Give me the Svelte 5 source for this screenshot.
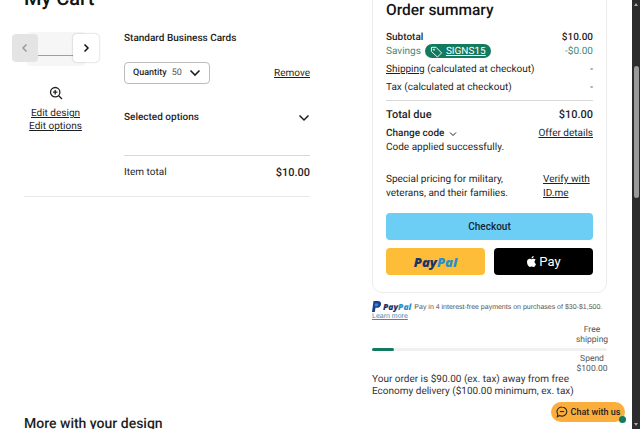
<script lang="ts">
  const summaryRows = [
    { label: 'Shipping', note: ' (calculated at checkout)', link: true },
    { label: 'Tax', note: ' (calculated at checkout)', link: false },
  ];
</script>

<div class="shell">
  <div class="page">
    <h1>My Cart</h1>

    <div class="columns">
      <section class="cart">
        <div class="item">
          <div class="preview">
            <div class="carousel">
              <div class="thumb"><span class="thumb-line"></span></div>
              <button class="arrow prev" aria-label="Previous">
                <svg width="12" height="12" viewBox="0 0 12 12"><path d="M7.500 2.500 4 6l3.500 3.500" /></svg>
              </button>
              <button class="arrow next" aria-label="Next">
                <svg width="12" height="12" viewBox="0 0 12 12"><path d="M4.500 2.500 8 6 4.500 9.500" /></svg>
              </button>
            </div>
            <svg class="zoom" width="14" height="14" viewBox="0 0 14 14">
              <circle cx="6.200" cy="6.200" r="4.700" />
              <path d="M6.200 4v4.400M4 6.200h4.400M9.700 9.700 13 13" />
            </svg>
            <a href="#design">Edit design</a>
            <a href="#options">Edit options</a>
          </div>

          <div class="details">
            <div class="name">Standard Business Cards</div>
            <div class="qty-row">
              <div class="qty">
                <b>Quantity</b><span>50</span>
                <svg width="12" height="12" viewBox="0 0 12 12"><path d="M1.500 3.500 6 8l4.500-4.500" /></svg>
              </div>
              <a href="#remove">Remove</a>
            </div>
            <div class="options">
              <b>Selected options</b>
              <svg width="12" height="12" viewBox="0 0 12 12"><path d="M1.500 3.500 6 8l4.500-4.500" /></svg>
            </div>
            <div class="total">
              <span>Item total</span><b>$10.00</b>
            </div>
          </div>
        </div>
      </section>

      <aside class="side">
        <div class="card">
          <h2>Order summary</h2>
          <div class="row strong"><span>Subtotal</span><span>$10.00</span></div>
          <div class="row savings">
            <span class="savings-label">Savings
              <span class="pill">
                <svg viewBox="0 0 14 14"><path d="M1.500 2.500h5l6 6-4.500 4.500-6.500-6z" /><circle cx="4.300" cy="5" r=".7" /></svg>
                <u>SIGNS15</u>
              </span>
            </span>
            <span>-$0.00</span>
          </div>
          {#each summaryRows as r}
            <div class="row plain">
              <span>{#if r.link}<u>{r.label}</u>{:else}{r.label}{/if}{r.note}</span><span>-</span>
            </div>
          {/each}
          <div class="row due"><b>Total due</b><b>$10.00</b></div>
          <div class="row code">
            <span class="change">Change code
              <svg width="8" height="8" viewBox="0 0 8 8"><path d="M1 2.500 4 5.500l3-3" /></svg>
            </span>
            <a href="#offer">Offer details</a>
          </div>
          <div class="applied">Code applied successfully.</div>
          <div class="military">
            <span>Special pricing for military, veterans, and their families.</span>
            <a href="#idme">Verify with ID.me</a>
          </div>
          <button class="checkout">Checkout</button>
          <div class="pay">
            <button class="paypal"><i class="pp-a">Pay</i><i class="pp-b">Pal</i></button>
            <button class="apple">
              <svg width="11" height="11" viewBox="0 0 24 24"><path d="M12.152 6.896c-.948 0-2.415-1.078-3.96-1.04-2.04.027-3.91 1.183-4.961 3.014-2.117 3.675-.546 9.103 1.519 12.09 1.013 1.454 2.208 3.09 3.792 3.039 1.52-.065 2.09-.987 3.935-.987 1.831 0 2.35.987 3.96.948 1.637-.026 2.676-1.48 3.676-2.948 1.156-1.688 1.636-3.325 1.662-3.415-.039-.013-3.182-1.221-3.22-4.857-.026-3.04 2.48-4.494 2.597-4.559-1.429-2.09-3.623-2.324-4.39-2.376-2-.156-3.675 1.09-4.61 1.09zM15.53 3.83c.843-1.012 1.4-2.427 1.245-3.83-1.207.052-2.662.805-3.532 1.818-.78.896-1.454 2.338-1.273 3.714 1.338.104 2.715-.688 3.559-1.701" /></svg>
              <span>Pay</span>
            </button>
          </div>
        </div>

        <div class="later">
          <svg width="10" height="12" viewBox="0 0 10 12"><path fill="#1b3f8f" d="M1.500 0h4.300C8.200 0 9.500 1.300 9 3.400 8.500 5.600 7 6.800 4.800 6.800H3.500L2.800 11H0z" /><path fill="#2b8fd6" d="M3 2.500h2c1 0 1.500.5 1.300 1.300-.2 1-1 1.500-2 1.500H2.600z" /></svg>
          <i class="pp-a">Pay</i><i class="pp-b">Pal</i>
          <span>Pay in 4 interest-free payments on purchases of $30-$1,500.</span>
        </div>
        <a class="learn" href="#learn">Learn more</a>

        <div class="progress-top">Free<br />shipping</div>
        <div class="progress"><div class="progress-fill" style:width="{(22 / 235) * 100}%"></div></div>
        <div class="progress-bottom">Spend<br />$100.00</div>
        <p class="delivery">Your order is $90.00 (ex. tax) away from free Economy delivery ($100.00 minimum, ex. tax)</p>
      </aside>
    </div>

    <h3>More with your design</h3>
  </div>

  <div class="scrollbar">
    <span class="tri up"></span>
    <span class="scroll-thumb"></span>
    <span class="tri down"></span>
  </div>

  <button class="chat">
    <svg width="12" height="12" viewBox="0 0 14 14"><path d="M7 1.200a5.600 5.300 0 1 1-2.800 9.900L1.500 12.600l.7-3A5.600 5.300 0 0 1 7 1.200z" /><path d="M4.500 6.500h5" /></svg>
    Chat with us
    <span class="dot"></span>
  </button>
</div>

<style>
  :global(body) { margin: 0; background: #fff; }

  .shell {
    position: relative;
    display: flex;
    width: 640px;
    height: 429px;
    overflow: hidden;
    font-family: Roboto, "Noto Sans", sans-serif;
    font-size: 10px;
    line-height: 13px;
    color: #1f1f1f;
    text-rendering: geometricPrecision;
  }

  .page { width: 632px; flex: none; padding-left: 24px; box-sizing: border-box; }

  h1 { margin: -14px 0 0; font-size: 20px; line-height: 24px; font-weight: 500; color: #111; }

  a, u { color: inherit; text-decoration: underline; text-underline-offset: 1px; }
  button { font-family: inherit; border: 0; padding: 0; }
  svg { display: block; fill: none; stroke: currentColor; }

  .columns { display: flex; gap: 62px; align-items: flex-start; margin-top: -10px; }

  /* cart column */
  .cart { width: 286px; flex: none; padding-top: 32px; }
  .item {
    display: flex;
    height: 164px;
    border-bottom: 1px solid #e8e8e8;
  }

  .preview {
    width: 87px;
    flex: none;
    margin-left: -12px;
    display: flex;
    flex-direction: column;
    align-items: center;
  }
  .carousel { position: relative; width: 87px; height: 34px; }
  .thumb {
    position: absolute; left: 15px; right: 14px; top: 0; bottom: 0;
    background: #f6f6f6; border-radius: 4px;
  }
  .thumb-line { position: absolute; left: 10px; right: 10px; top: 23px; height: 1px; background: #8aa4b8; }
  .arrow {
    position: absolute; top: 2px; width: 26px; height: 28px;
    display: flex; align-items: center; justify-content: center;
    border-radius: 4px;
  }
  .arrow svg { stroke-width: 1.500; }
  .prev { left: 0; background: #e4e4e4; color: #9b9b9b; }
  .next { right: 0; background: #fff; color: #111; box-shadow: 0 0 2px rgba(0, 0, 0, .3); }
  .zoom { margin: 20px 0 7px; stroke-width: 1.300; color: #222; }
  .preview a { line-height: 13px; }

  .details { flex: 1; margin-left: 25px; }
  .name { font-weight: 500; color: #222; }
  .qty-row { display: flex; justify-content: space-between; align-items: center; margin-top: 17px; }
  .qty {
    display: flex; align-items: center;
    width: 86px; height: 22px;
    box-sizing: border-box;
    padding: 0 8px;
    border: 1px solid #bcbcbc; border-radius: 4px;
    font-size: 9px;
  }
  .qty b { font-weight: 500; }
  .qty span { margin-left: 5px; color: #555; }
  .qty svg { margin-left: auto; stroke-width: 1.600; }
  .options {
    display: flex; justify-content: space-between; align-items: center;
    margin-top: 27px; padding-bottom: 31px;
    border-bottom: 1px solid #d8d8d8;
  }
  .options b { font-weight: 500; }
  .options svg { stroke-width: 1.500; }
  .total { display: flex; justify-content: space-between; margin-top: 10px; }
  .total b { font-weight: 500; font-size: 11px; }

  /* summary column */
  .side { width: 235px; flex: none; }
  .card {
    margin-top: -19px;
    padding: 18px 13px 17px;
    border: 1px solid #ececec;
    border-radius: 10px;
  }
  h2 { margin: 0 0 10px; font-size: 15.500px; line-height: 20px; font-weight: 500; color: #151515; }
  .row { display: flex; justify-content: space-between; align-items: center; }
  .strong { height: 14px; font-weight: 500; }
  .savings { height: 14px; margin-bottom: 2px; color: #3d8a76; }
  .savings-label { display: flex; align-items: center; gap: 4px; }
  .pill {
    display: inline-flex; align-items: center; gap: 3px;
    height: 14px; padding: 0 5px;
    border-radius: 7px;
    background: #127a5f; color: #fff;
  }
  .pill svg { stroke-width: 1; width: 13px; height: 13px; }
  .plain { height: 18px; }
  .due {
    margin-top: 4px; padding-top: 3px; height: 20px;
    border-top: 1px solid #d8d8d8;
    font-size: 11px;
  }
  .due b { font-weight: 500; }
  .code { margin-top: 2px; height: 15px; }
  .change { display: flex; align-items: center; gap: 5px; font-weight: 500; }
  .change svg { stroke-width: 1; }
  .applied { height: 13px; }
  .military {
    display: grid; grid-template-columns: 1fr 50px; gap: 5px;
    margin-top: 19px; line-height: 14px;
  }
  .checkout {
    display: block; width: 100%; height: 27px; margin-top: 12px;
    border-radius: 4px;
    background: #6ccdf5; color: #10293a;
    font-size: 10px; font-weight: 500;
  }
  .pay { display: grid; grid-template-columns: 1fr 1fr; gap: 9px; margin-top: 8px; }
  .pay button { height: 27px; border-radius: 4px; display: flex; align-items: center; justify-content: center; }
  .paypal { background: #fdbd39; font-size: 13px; }
  .pp-a { color: #1b3468; font-weight: 800; font-family: "Open Sans", sans-serif; }
  .pp-b { color: #2b8fc9; font-weight: 800; font-family: "Open Sans", sans-serif; }
  .apple { background: #000; color: #fff; gap: 2px; font-size: 13px; }
  .apple svg { fill: #fff; stroke: none; }

  .later {
    display: flex; align-items: center;
    margin-top: 9px; height: 10px;
    font-size: 7px; color: #555;
    font-family: "Liberation Sans", sans-serif;
    white-space: nowrap;
  }
  .later svg { stroke: none; margin-right: 1px; }
  .later .pp-a, .later .pp-b { font-size: 8.500px; }
  .later span { margin-left: 3px; }
  .learn { display: block; font-size: 7px; line-height: 9px; color: #3c8ab5; font-family: "Liberation Sans", sans-serif; }

  .progress-top, .progress-bottom {
    margin-left: auto; margin-right: -8px; width: 46px;
    text-align: center; font-size: 8.500px; line-height: 10px; color: #555;
  }
  .progress-top { margin-top: 4px; }
  .progress { height: 3px; margin-top: 3px; border-radius: 2px; background: #f0f0f0; }
  .progress-fill { height: 100%; background: #127a5f; border-radius: 2px; }
  .progress-bottom { margin-top: 3px; }
  .delivery { margin: 0; line-height: 12px; color: #333; width: 240px; }

  h3 { margin: 17px 0 0; font-size: 14px; line-height: 18px; font-weight: 500; }

  .scrollbar {
    width: 8px; flex: none; position: relative;
    background: #2c2c2c;
  }
  .scroll-thumb {
    position: absolute; left: 1.500px; right: 1.500px; top: 66px; height: 132px;
    border-radius: 3px; background: #9a9a9a;
  }
  .tri { position: absolute; left: 1.500px; border-left: 2.500px solid transparent; border-right: 2.500px solid transparent; }
  .up { top: 3px; border-bottom: 3px solid #aaa; }
  .down { bottom: 3px; border-top: 3px solid #aaa; }

  .chat {
    position: absolute; left: 551px; top: 402px;
    width: 74px; height: 20px;
    display: flex; align-items: center; justify-content: center; gap: 3px;
    border-radius: 10px;
    background: #fbae3c; color: #222;
    font-size: 9px; font-weight: 500;
  }
  .chat svg { stroke-width: 1.200; flex: none; }
  .dot {
    position: absolute; right: -1px; bottom: -1px;
    width: 7px; height: 7px; border-radius: 50%;
    background: #127a5f;
  }
</style>
